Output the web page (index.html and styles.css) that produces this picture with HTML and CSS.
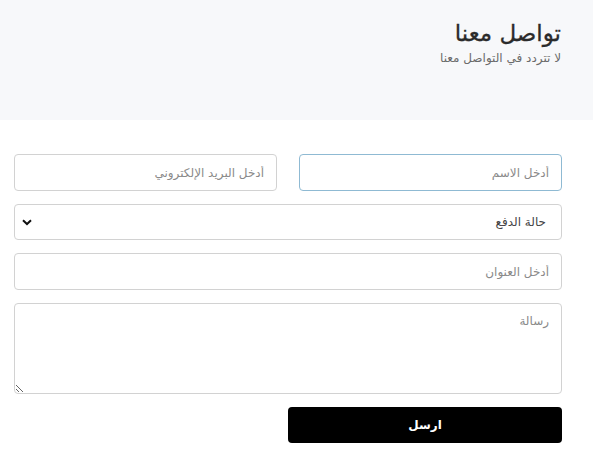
FILE: index.html
```html
<!DOCTYPE html>
<html lang="ar" dir="rtl">
<head>
<meta charset="utf-8">
<link rel="stylesheet" href="styles.css">
</head>
<body>
<header class="hero">
  <h1 class="hero-title">تواصل معنا</h1>
  <p class="hero-sub">لا تتردد في التواصل معنا</p>
</header>
<form class="contact">
  <div class="row">
    <input class="field field-focus" type="text" placeholder="أدخل الاسم" autofocus>
    <input class="field" type="email" placeholder="أدخل البريد الإلكتروني">
  </div>
  <select class="field select">
    <option>حالة الدفع</option>
  </select>
  <input class="field" type="text" placeholder="أدخل العنوان">
  <textarea class="field area" placeholder="رسالة"></textarea>
  <div class="actions">
    <button type="button" class="send">ارسل</button>
  </div>
</form>
</body>
</html>
```
FILE: styles.css
```css
html, body {
  margin: 0;
  background: #ffffff;
  font-family: "DejaVu Sans", "Noto Sans", sans-serif;
}
.hero {
  background: #f7f8fa;
  height: 120px;
  box-sizing: border-box;
  padding: 19px 32px 0 0;
}
.hero-title {
  margin: 0;
  font-size: 23px;
  font-weight: normal;
  color: #2b2b2b;
  line-height: 28px;
  -webkit-text-stroke: 0.3px #2b2b2b;
}
.hero-sub {
  margin: 3px 0 0;
  font-size: 12px;
  color: #6b6b6b;
  line-height: 16px;
}
.contact {
  display: flex;
  flex-direction: column;
  gap: 13px;
  padding: 34px 31px 0 14px;
}
.row {
  display: flex;
  gap: 22px;
}
.row .field {
  flex: 1;
  min-width: 0;
}
.field {
  box-sizing: border-box;
  height: 37px;
  border: 1px solid #d2d2d2;
  border-radius: 4px;
  padding: 0 12px;
  font-family: "DejaVu Sans", sans-serif;
  font-size: 12px;
  color: #555;
  background: #fff;
  outline: none;
}
.field::placeholder {
  color: #8a8a8a;
}
.field-focus {
  border-color: #8fbad3;
}
.select {
  appearance: none;
  -webkit-appearance: none;
  height: 36px;
  padding-right: 15px;
  color: #444;
  background-image: url("data:image/svg+xml;utf8,<svg xmlns='http://www.w3.org/2000/svg' width='10' height='7' viewBox='0 0 10 7'><path d='M1 1.2 L5 5 L9 1.2' fill='none' stroke='%23111' stroke-width='2'/></svg>");
  background-repeat: no-repeat;
  background-position: left 7px center;
  background-size: 10px 7px;
}
.area {
  height: 91px;
  padding-top: 10px;
  resize: both;
}
.actions {
  display: flex;
}
.send {
  width: 274px;
  height: 36px;
  border: none;
  border-radius: 4px;
  background: #000;
  color: #fff;
  font-family: "DejaVu Sans", sans-serif;
  font-weight: bold;
  font-size: 12px;
}
```
